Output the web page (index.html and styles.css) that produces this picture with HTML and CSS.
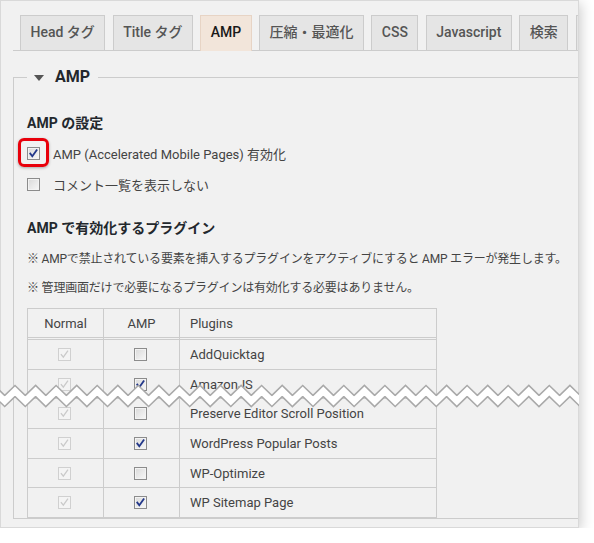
FILE: index.html
```html
<!DOCTYPE html>
<html lang="ja">
<head>
<meta charset="utf-8">
<title>AMP 設定</title>
<link rel="stylesheet" href="styles.css">
</head>
<body>
<div class="stage">
  <div class="window">
    <nav class="tabs">
      <span class="tab">Head タグ</span>
      <span class="tab">Title タグ</span>
      <span class="tab active">AMP</span>
      <span class="tab">圧縮・最適化</span>
      <span class="tab">CSS</span>
      <span class="tab">Javascript</span>
      <span class="tab">検索</span>
      <span class="tab tab-more"></span>
    </nav>
    <fieldset class="section">
      <legend><span class="caret"></span>AMP</legend>
      <h3 class="head">AMP の設定</h3>
      <div class="opts">
        <label class="opt">
          <span class="cb-wrap">
            <span class="cb"><svg viewBox="0 0 11 11"><path d="M2.3 5.6 L4.3 8.2 L8.6 2.2"/></svg></span>
            <span class="mark"></span>
          </span>
          AMP (Accelerated Mobile Pages) 有効化
        </label>
        <label class="opt">
          <span class="cb"></span>
          コメント一覧を表示しない
        </label>
      </div>
      <h3 class="head sub">AMP で有効化するプラグイン</h3>
      <p class="note">※ AMPで禁止されている要素を挿入するプラグインをアクティブにすると AMP エラーが発生します。</p>
      <p class="note second">※ 管理画面だけで必要になるプラグインは有効化する必要はありません。</p>
      <table class="plugins">
        <thead>
          <tr><th class="col-n">Normal</th><th class="col-a">AMP</th><th class="col-p">Plugins</th></tr>
        </thead>
        <tbody>
          <tr>
            <td class="c"><span class="cb dis"><svg viewBox="0 0 11 11"><path d="M2.3 5.6 L4.3 8.2 L8.6 2.2"/></svg></span></td>
            <td class="c"><span class="cb"></span></td>
            <td class="name">AddQuicktag</td>
          </tr>
          <tr>
            <td class="c"><span class="cb dis"><svg viewBox="0 0 11 11"><path d="M2.3 5.6 L4.3 8.2 L8.6 2.2"/></svg></span></td>
            <td class="c"><span class="cb"><svg viewBox="0 0 11 11"><path d="M2.3 5.6 L4.3 8.2 L8.6 2.2"/></svg></span></td>
            <td class="name">AmazonJS</td>
          </tr>
          <tr>
            <td class="c"><span class="cb dis"><svg viewBox="0 0 11 11"><path d="M2.3 5.6 L4.3 8.2 L8.6 2.2"/></svg></span></td>
            <td class="c"><span class="cb"></span></td>
            <td class="name">Preserve Editor Scroll Position</td>
          </tr>
          <tr>
            <td class="c"><span class="cb dis"><svg viewBox="0 0 11 11"><path d="M2.3 5.6 L4.3 8.2 L8.6 2.2"/></svg></span></td>
            <td class="c"><span class="cb"><svg viewBox="0 0 11 11"><path d="M2.3 5.6 L4.3 8.2 L8.6 2.2"/></svg></span></td>
            <td class="name">WordPress Popular Posts</td>
          </tr>
          <tr>
            <td class="c"><span class="cb dis"><svg viewBox="0 0 11 11"><path d="M2.3 5.6 L4.3 8.2 L8.6 2.2"/></svg></span></td>
            <td class="c"><span class="cb"></span></td>
            <td class="name">WP-Optimize</td>
          </tr>
          <tr>
            <td class="c"><span class="cb dis"><svg viewBox="0 0 11 11"><path d="M2.3 5.6 L4.3 8.2 L8.6 2.2"/></svg></span></td>
            <td class="c"><span class="cb"><svg viewBox="0 0 11 11"><path d="M2.3 5.6 L4.3 8.2 L8.6 2.2"/></svg></span></td>
            <td class="name">WP Sitemap Page</td>
          </tr>
        </tbody>
      </table>
    </fieldset>
  </div>
  <svg class="tear" viewBox="0 0 579 32" preserveAspectRatio="none" aria-hidden="true">
    <polyline class="tear-edge" points="-5.6,10 4.7,20 15,10 25.3,20 35.6,10 45.8,20 56.1,10 66.4,20 76.7,10 86.9,20 97.2,10 107.5,20 117.8,10 128,20 138.3,10 148.6,20 158.9,10 169.1,20 179.4,10 189.7,20 200,10 210.2,20 220.5,10 230.8,20 241.1,10 251.3,20 261.6,10 271.9,20 282.2,10 292.4,20 302.7,10 313,20 323.3,10 333.5,20 343.8,10 354.1,20 364.4,10 374.6,20 384.9,10 395.2,20 405.5,10 415.7,20 426,10 436.3,20 446.6,10 456.8,20 467.1,10 477.4,20 487.7,10 497.9,20 508.2,10 518.5,20 528.8,10 539,20 549.3,10 559.6,20 569.9,10 580.1,20 590.4,10"/>
    <polyline class="tear-fill" points="-5.6,10 4.7,20 15,10 25.3,20 35.6,10 45.8,20 56.1,10 66.4,20 76.7,10 86.9,20 97.2,10 107.5,20 117.8,10 128,20 138.3,10 148.6,20 158.9,10 169.1,20 179.4,10 189.7,20 200,10 210.2,20 220.5,10 230.8,20 241.1,10 251.3,20 261.6,10 271.9,20 282.2,10 292.4,20 302.7,10 313,20 323.3,10 333.5,20 343.8,10 354.1,20 364.4,10 374.6,20 384.9,10 395.2,20 405.5,10 415.7,20 426,10 436.3,20 446.6,10 456.8,20 467.1,10 477.4,20 487.7,10 497.9,20 508.2,10 518.5,20 528.8,10 539,20 549.3,10 559.6,20 569.9,10 580.1,20 590.4,10"/>
  </svg>
</div>
</body>
</html>
```
FILE: styles.css
```css
html, body {
  margin: 0;
  padding: 0;
  background: #ffffff;
}

body {
  font-family: Roboto, "Noto Sans CJK JP", sans-serif;
  font-size: 13px;
  color: #444444;
}

.stage {
  position: relative;
  width: 579px;
  height: 528px;
}

.window {
  width: 579px;
  height: 528px;
  box-sizing: border-box;
  border: 1px solid #d9d9d9;
  background: #f1f1f1;
  overflow: hidden;
  box-shadow: 2px 3px 12px rgba(0, 0, 0, 0.2);
}

/* Tabs */
.tabs {
  display: flex;
  width: 720px;
  height: 35px;
  margin: 14px 0 0 12px;
  border-bottom: 1px solid #cccccc;
}

.tab {
  flex: none;
  height: 35px;
  box-sizing: border-box;
  margin-left: 7.3px;
  padding: 0 9.5px;
  border: 1px solid #cccccc;
  border-bottom: 0;
  background: #e5e5e5;
  color: #555555;
  font-size: 14px;
  font-weight: 500;
  line-height: 33px;
  white-space: nowrap;
}

.tab:first-child {
  margin-left: 7px;
}

.tab.active {
  height: 36px;
  background: #f2e5da;
  border-color: #e7d4c5;
  color: #1a1a1a;
}

.tab-more {
  width: 60px;
}

/* Section fieldset */
.section {
  width: 720px;
  margin: 14px 0 0 12px;
  padding: 24px 13px 0;
  border: 1px solid #cccccc;
  min-width: 0;
}

.section legend {
  padding: 0 8px 0 7px;
  font-size: 16px;
  font-weight: 700;
  line-height: 24px;
  color: #23282d;
}

.caret {
  display: inline-block;
  width: 0;
  height: 0;
  border-left: 5px solid transparent;
  border-right: 5px solid transparent;
  border-top: 6px solid #555555;
  margin-right: 11px;
  vertical-align: middle;
}

.head {
  margin: 0 0 5px;
  font-size: 14px;
  font-weight: 700;
  line-height: 20px;
  color: #23282d;
}

.head.sub {
  margin: 18px 0 11px;
}

.opt {
  display: flex;
  align-items: center;
  gap: 13px;
  height: 31px;
  font-size: 13px;
  color: #444444;
  white-space: nowrap;
}

.cb-wrap {
  position: relative;
  display: block;
  width: 13px;
  height: 13px;
}

.mark {
  position: absolute;
  left: -9px;
  top: -9.5px;
  width: 31px;
  height: 29px;
  box-sizing: border-box;
  border: 3px solid #e8000b;
  border-radius: 6px;
  box-shadow: 0 1px 3px rgba(0, 0, 0, 0.3);
}

/* Checkbox */
.cb {
  display: block;
  flex: none;
  width: 13px;
  height: 13px;
  box-sizing: border-box;
  border: 1px solid #8c8c8c;
  background: linear-gradient(135deg, #d9d9d9, #f8f8f8);
  box-shadow: inset 0 0 0 1px #f3f3f3;
}

.cb svg {
  display: block;
  width: 11px;
  height: 11px;
}

.cb path {
  fill: none;
  stroke: #23388a;
  stroke-width: 1.8;
  stroke-linecap: square;
  stroke-linejoin: miter;
}

.cb.dis {
  border-color: #d0d0d0;
  background: #f4f4f4;
  box-shadow: none;
}

.cb.dis path {
  stroke: #cacaca;
  stroke-width: 1.3;
}

/* Notes */
.note {
  margin: 0;
  font-size: 12px;
  line-height: 20px;
  letter-spacing: -0.2px;
  white-space: nowrap;
  color: #444444;
}

.note.second {
  margin-top: 9px;
}

/* Table */
.plugins {
  margin-top: 10px;
  width: 410px;
  border-collapse: separate;
  border-spacing: 0;
  border: 1px solid #cccccc;
}

.plugins th,
.plugins td {
  padding: 0;
  font-size: 13px;
  color: #444444;
  white-space: nowrap;
}

.plugins th {
  height: 28px;
  font-weight: 400;
  text-align: center;
  border-bottom: 3px double #cccccc;
}

.plugins th + th,
.plugins td + td {
  border-left: 1px solid #cccccc;
}

.plugins .col-n {
  width: 75px;
}

.plugins .col-a {
  width: 75px;
}

.plugins .col-p {
  text-align: left;
  padding-left: 10px;
}

.plugins td {
  height: 28.7px;
}

.plugins tbody tr + tr td {
  border-top: 1px solid #cccccc;
}

.plugins td.c {
  padding-right: 3px;
}

.plugins td.c .cb {
  margin: 0 auto;
}

.plugins td.name {
  padding-left: 10px;
}

/* Torn-edge overlay */
.tear {
  position: absolute;
  left: 0;
  top: 381px;
  width: 579px;
  height: 32px;
  overflow: hidden;
}

.tear-edge {
  fill: none;
  stroke: #a9a9a9;
  stroke-width: 9.5;
  stroke-linejoin: miter;
}

.tear-fill {
  fill: none;
  stroke: #ffffff;
  stroke-width: 6.5;
  stroke-linejoin: miter;
}
```
